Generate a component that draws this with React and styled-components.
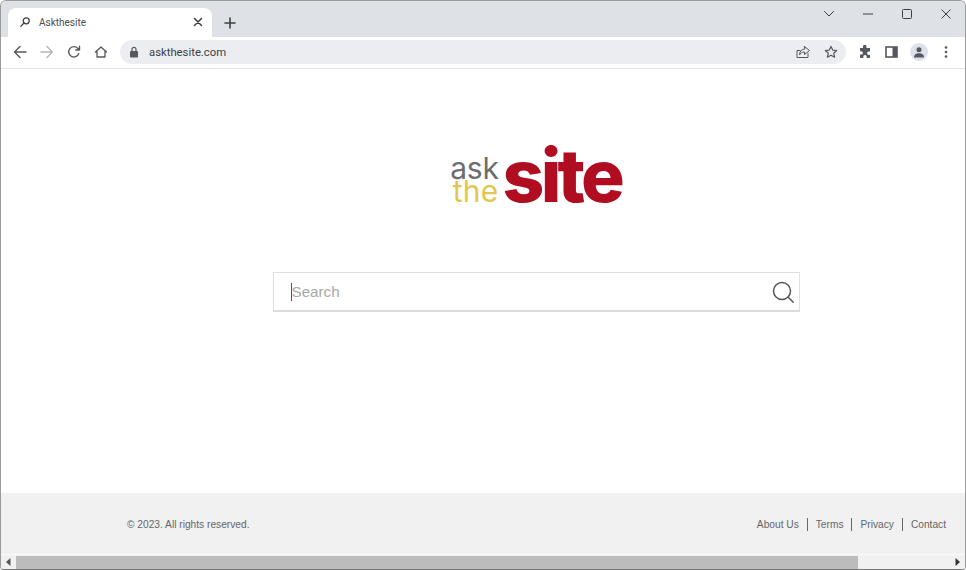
import React from "react";
import styled, { createGlobalStyle } from "styled-components";

const Global = createGlobalStyle`
  html, body { margin: 0; padding: 0; background: #fff; overflow: hidden; }
  * { box-sizing: border-box; }
`;

const Window = styled.div`
  width: 966px; height: 570px; display: flex; flex-direction: column;
  border: 1px solid #9a9a9a; border-bottom-color: #777; border-radius: 6px 6px 4px 4px;
  overflow: hidden; background: #fff; font-family: "Roboto", "Liberation Sans", sans-serif;
`;
const TabStrip = styled.div`
  height: 36px; flex: none; background: #dee1e6; display: flex; align-items: flex-end; padding-left: 7px;
`;
const Tab = styled.div`
  width: 204px; height: 29px; background: #fff; border-radius: 8px 8px 0 0;
  display: flex; align-items: center; padding: 0 9px 1px 11px; color: #3c4043;
`;
const TabTitle = styled.span`
  font-size: 10px; margin-left: 8px; flex: 1; color: #4a4d50;
`;
const NewTab = styled.div`
  width: 36px; height: 29px; display: flex; align-items: center; justify-content: center; color: #3c4043;
`;
const Controls = styled.div`
  margin-left: auto; height: 36px; width: 156px; display: flex; align-self: flex-start; color: #3c4043;
`;
const Control = styled.div`
  width: 39px; height: 26px; display: flex; align-items: center; justify-content: center;
`;
const Toolbar = styled.div`
  height: 32px; flex: none; background: #fff; display: flex; align-items: center; padding: 0 0 1px 5px;
  border-bottom: 1px solid #e2e4e7; color: #5f6368;
`;
const ToolButton = styled.div`
  width: ${p => p.$w || 27}px; height: 24px; flex: none; display: flex; align-items: center; justify-content: center;
  color: ${p => p.$dim ? "#b4b6b9" : "#55585c"};
`;
const Omnibox = styled.div`
  width: 726px; height: 24px; margin: 0 5px 0 6px; flex: none; background: #ebedf0; border-radius: 12px;
  display: flex; align-items: center; padding: 0 2px 0 9px;
`;
const Url = styled.span`
  font-size: 11.3px; color: #3c4043; margin-left: 10px; flex: 1;
`;
const Avatar = styled.div`
  width: 18px; height: 18px; border-radius: 50%; background: #dfe1ea; display: flex; align-items: center; justify-content: center; overflow: hidden;
`;
const Main = styled.main`
  flex: 1; display: flex; flex-direction: column; align-items: center; padding: 76px 0 0 106px; background: #fff;
`;
const Logo = styled.div`
  height: 62px; display: flex; align-items: flex-end; gap: 3px; width: 172px; margin-right: 1px;
`;
const LogoSmall = styled.div`
  display: flex; flex-direction: column; align-items: center; width: 50px; flex: none; font-family: "Inter", "Liberation Sans", sans-serif;
  font-size: 30px; line-height: 23px; letter-spacing: -.2px; padding-bottom: 4px;
`;
const Ask = styled.span` color: #6d6e71; `;
const The = styled.span` color: #e3c64c; letter-spacing: .2px; margin-left: 2px; `;
const Site = styled.span`
  font-family: "Inter", "Liberation Sans", sans-serif; font-weight: 800; font-size: 73px; line-height: 62px;
  color: #b00d20; letter-spacing: -3.7px; height: 62px;
`;
const SearchBox = styled.div`
  width: 527px; height: 40px; margin-top: 65px; border: 1px solid #e0e0e0; border-bottom: 2px solid #dcdcdc;
  display: flex; align-items: center; padding: 0 3px 0 17px; background: #fff;
`;
const Caret = styled.span` width: 1px; height: 18px; background: #555; flex: none; `;
const Placeholder = styled.span`
  font-family: "Liberation Sans", Arial, sans-serif; font-size: 15.2px; color: #a8a8a8; flex: 1;
`;
const Footer = styled.footer`
  height: 61px; flex: none; background: #f1f1f2; display: flex; align-items: center; justify-content: space-between;
  padding: 2px 19px 0 126px; font-family: "Liberation Sans", Arial, sans-serif; font-size: 10.2px; color: #666;
`;
const Links = styled.nav` display: flex; align-items: center; `;
const FooterLink = styled.a`
  padding: 0 8px; line-height: 13px; border-left: ${p => p.$first ? "none" : "1px solid #666"};
  &:last-child { padding-right: 0; }
`;
const Scrollbar = styled.div`
  height: 15px; flex: none; background: #f1f1f1; display: flex; align-items: center; border-top: 1px solid #fafafa;
`;
const Arrow = styled.div`
  width: 15px; height: 14px; flex: none; display: flex; align-items: center; justify-content: center;
`;
const Track = styled.div` flex: 1; height: 13px; `;
const Thumb = styled.div` height: 100%; background: #bcbcbc; `;

const stroke = { fill: "none", stroke: "currentColor", strokeWidth: 1.4, strokeLinecap: "round", strokeLinejoin: "round" };

export default function App() {
  return (
    <>
      <Global />
      <Window>
        <TabStrip>
          <Tab>
            <svg width="12" height="12" viewBox="0 0 12 12" {...stroke} strokeWidth="1.3"><circle cx="7.2" cy="4.8" r="3" /><path d="M5 7 1.8 10.4" /></svg>
            <TabTitle>Askthesite</TabTitle>
            <svg width="10" height="10" viewBox="0 0 10 10" {...stroke} strokeWidth="1.5"><path d="m1.5 1.5 7 7m0-7-7 7" /></svg>
          </Tab>
          <NewTab>
            <svg width="12" height="12" viewBox="0 0 12 12" {...stroke} strokeWidth="1.6"><path d="M6 1v10M1 6h10" /></svg>
          </NewTab>
          <Controls>
            <Control><svg width="12" height="8" viewBox="0 0 12 8" {...stroke} strokeWidth="1"><path d="m1.5 1.5 4.5 4.5 4.5-4.5" /></svg></Control>
            <Control><svg width="10" height="2" viewBox="0 0 10 2"><path d="M0 1h10" stroke="currentColor" /></svg></Control>
            <Control><svg width="10" height="10" viewBox="0 0 10 10"><rect x=".5" y=".5" width="9" height="9" rx="1" fill="none" stroke="currentColor" /></svg></Control>
            <Control><svg width="10" height="10" viewBox="0 0 10 10"><path d="m.5.5 9 9m0-9-9 9" stroke="currentColor" fill="none" /></svg></Control>
          </Controls>
        </TabStrip>
        <Toolbar>
          <ToolButton><svg width="14" height="14" viewBox="0 0 14 14" {...stroke}><path d="M13 7H1.5M7 1.5 1.5 7 7 12.5" /></svg></ToolButton>
          <ToolButton $dim><svg width="14" height="14" viewBox="0 0 14 14" {...stroke}><path d="M1 7h11.5M7 1.5 12.5 7 7 12.5" /></svg></ToolButton>
          <ToolButton><svg width="14" height="14" viewBox="0 0 14 14" {...stroke}><path d="M11.8 8.6A5.2 5.2 0 1 1 10.7 3.3L12.5 5M12.5 1.3V5H8.8" /></svg></ToolButton>
          <ToolButton><svg width="14" height="14" viewBox="0 0 14 14" {...stroke} strokeWidth="1.3"><path d="M1.5 7 7 2l5.5 5M3 6v6h8V6" /></svg></ToolButton>
          <Omnibox>
            <svg width="10" height="12" viewBox="0 0 10 12"><rect x="1" y="5" width="8" height="6.5" rx="1" fill="#55585c" /><path d="M3 5V3.4a2 2 0 0 1 4 0V5" fill="none" stroke="#55585c" strokeWidth="1.2" /></svg>
            <Url>askthesite.com</Url>
            <ToolButton $w={28}><svg width="14" height="14" viewBox="0 0 14 14" {...stroke} strokeWidth="1"><path d="M12 8.500V12.500H1V5.500H4" /><path d="M8.500 1.500 13.500 5.500 8.500 9.500V7C6 7 4.500 8 3.500 10 3.500 6.500 5.500 4.200 8.500 4Z" /></svg></ToolButton>
            <ToolButton $w={27}><svg width="14" height="14" viewBox="0 0 14 14" {...stroke} strokeWidth="1.2"><path d="m7 1.400 1.700 3.700 4 .4-3 2.700.9 4L7 10.200l-3.600 2 .9-4-3-2.700 4-.4Z" /></svg></ToolButton>
          </Omnibox>
          <ToolButton><svg width="14" height="14" viewBox="0 0 14 14" fill="#55585c"><path d="M5 1.500a1.700 1.700 0 0 1 3.400 0V3H12v3.500h-1.200a1.700 1.700 0 0 0 0 3.400H12V13H8.700v-1.200a1.700 1.700 0 0 0-3.400 0V13H2V9.600h1.200a1.700 1.700 0 0 0 0-3.400H2V3h3Z" /></svg></ToolButton>
          <ToolButton><svg width="13" height="12" viewBox="0 0 13 12"><rect x="1" y="1" width="11" height="10" fill="none" stroke="#55585c" strokeWidth="1.6" /><rect x="7.500" y="1" width="4.500" height="10" fill="#55585c" /></svg></ToolButton>
          <ToolButton><Avatar><svg width="12" height="12" viewBox="0 0 12 12" fill="#55585c"><circle cx="6" cy="3.700" r="2.500" /><path d="M1 11.500c0-3 2.200-4.200 5-4.200s5 1.200 5 4.200Z" /></svg></Avatar></ToolButton>
          <ToolButton><svg width="4" height="14" viewBox="0 0 4 14" fill="#55585c"><circle cx="2" cy="2.500" r="1.300" /><circle cx="2" cy="7" r="1.300" /><circle cx="2" cy="11.500" r="1.300" /></svg></ToolButton>
        </Toolbar>
        <Main>
          <Logo>
            <LogoSmall><Ask>ask</Ask><The>the</The></LogoSmall>
            <Site>site</Site>
          </Logo>
          <SearchBox>
            <Caret />
            <Placeholder>Search</Placeholder>
            <svg width="26" height="26" viewBox="0 0 26 26" fill="none" stroke="#555" strokeWidth="1.500" strokeLinecap="round"><circle cx="12" cy="12" r="8.500" /><path d="m18.200 18.200 5 5" /></svg>
          </SearchBox>
        </Main>
        <Footer>
          <span>© 2023. All rights reserved.</span>
          <Links>
            <FooterLink $first>About Us</FooterLink>
            <FooterLink>Terms</FooterLink>
            <FooterLink>Privacy</FooterLink>
            <FooterLink>Contact</FooterLink>
          </Links>
        </Footer>
        <Scrollbar>
          <Arrow><svg width="5" height="8" viewBox="0 0 5 8"><path d="M4.500 0v8L0 4Z" fill="#555" /></svg></Arrow>
          <Track><Thumb style={{ width: `${(842 / 934) * 100}%` }} /></Track>
          <Arrow><svg width="5" height="8" viewBox="0 0 5 8"><path d="M.5 0v8L5 4Z" fill="#333" /></svg></Arrow>
        </Scrollbar>
      </Window>
    </>
  );
}
